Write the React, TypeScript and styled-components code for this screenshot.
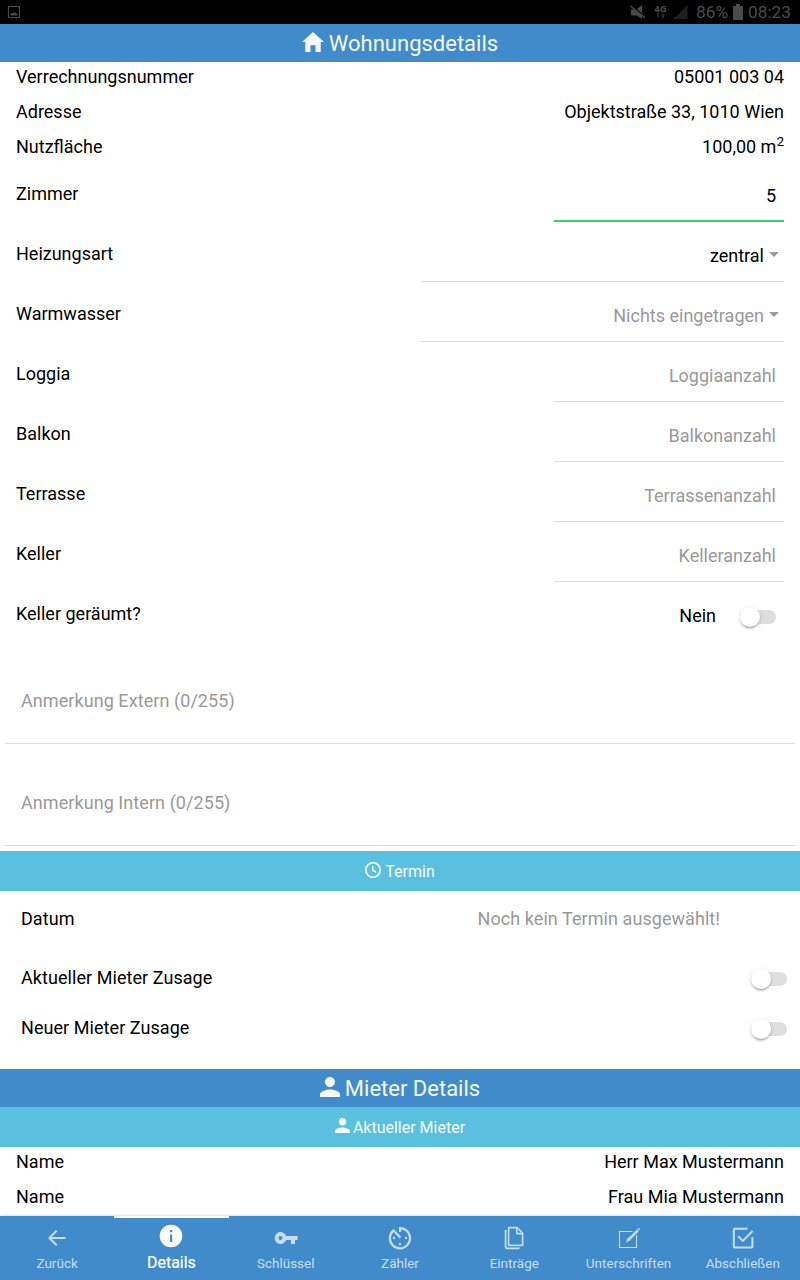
import React from "react";
import styled, { createGlobalStyle, css } from "styled-components";

const blue = "#428bca";
const cyan = "#5bc0de";

const GlobalStyle = createGlobalStyle`
  *, *::before, *::after { box-sizing: border-box; }
  body {
    margin: 0;
    background: #fff;
    color: #000;
    font: 18px/21px Roboto, sans-serif;
  }
  svg { display: block; flex: none; }
`;

const Screen = styled.div`
  display: flex;
  flex-direction: column;
  width: 800px;
  height: 1280px;
  overflow: hidden;
`;

const StatusBar = styled.div`
  flex: none;
  display: flex;
  align-items: center;
  height: 24px;
  padding: 0 8px 0 7px;
  background: #000;
  color: #4b4b4b;
  font-size: 17.3px;
`;

const StatusIcons = styled.div`
  display: flex;
  align-items: center;
  margin-left: auto;
`;

const StatusText = styled.span<{ $left: number; $width: number }>`
  margin-left: ${(p) => p.$left}px;
  width: ${(p) => p.$width}px;
  padding-top: 1px;
  white-space: nowrap;
`;

const NetworkBadge = styled.div`
  display: flex;
  flex-direction: column;
  align-items: center;
  width: 13px;
  margin: 0 6px 0 8px;
  padding-bottom: 2px;
  font: bold 9.5px/9px "Open Sans", sans-serif;
`;

const Main = styled.main`
  flex: 1;
  min-height: 0;
  overflow: hidden;
`;

const TitleBar = styled.header`
  display: flex;
  justify-content: center;
  align-items: center;
  gap: 5px;
  height: 38px;
  background: ${blue};
  color: #f4f8fc;
  font-size: 22px;
  line-height: 26px;
  svg { margin-top: -3px; }
  span { padding-top: 1px; }
`;

const SubtitleBar = styled.div`
  display: flex;
  justify-content: center;
  align-items: center;
  gap: 3px;
  height: 40px;
  background: ${cyan};
  color: #f4fbfd;
  font-size: 16px;
  svg { margin-top: -3px; }
  span { padding-top: 1px; }
`;

const InfoList = styled.div<{ $height: number }>`
  height: ${(p) => p.$height}px;
  padding: 4px 16px 0;
`;

const InfoRow = styled.div`
  display: flex;
  justify-content: space-between;
  height: 35px;
  sup {
    font-size: 13.5px;
    line-height: 0;
    vertical-align: 7px;
  }
`;

const FieldRow = styled.label`
  display: flex;
  justify-content: space-between;
  height: 60px;
  padding: 0 16px;
`;

const FieldLabel = styled.span`
  padding-top: 21px;
`;

const Control = styled.div<{ $wide?: boolean; $active?: boolean; $muted?: boolean }>`
  display: flex;
  justify-content: flex-end;
  width: ${(p) => (p.$wide ? 363 : 230)}px;
  padding: 23px ${(p) => (p.$wide ? 5 : 8)}px 0 0;
  border-bottom: ${(p) => (p.$active ? "2px solid #3fce6c" : "1px solid #dedede")};
  color: ${(p) => (p.$muted ? "#999" : "#000")};
`;

const Caret = styled.i`
  margin: 7px 0 0 5px;
  width: 10px;
  height: 5px;
  background: #999;
  clip-path: polygon(0 0, 100% 0, 50% 100%);
`;

const ToggleControl = styled.div`
  display: flex;
  gap: 24px;
  padding: 23px 8px 0 0;
`;

const Track = styled.span`
  position: relative;
  width: 36px;
  height: 14px;
  margin-top: 5px;
  border-radius: 7px;
  background: #dedede;
  &::after {
    content: "";
    position: absolute;
    left: 0;
    top: -3px;
    width: 20px;
    height: 20px;
    border-radius: 50%;
    background: #fff;
    box-shadow: 0 2px 2px rgba(0, 0, 0, 0.14), 0 3px 1px -2px rgba(0, 0, 0, 0.2),
      0 1px 5px rgba(0, 0, 0, 0.12);
  }
`;

const Note = styled.div`
  height: 102px;
  margin: 0 5px;
  padding: 48px 16px 0;
  border-bottom: 1px solid #dedede;
  color: #999;
  letter-spacing: 0.07px;
`;

const Notes = styled.section`
  padding-bottom: 5px;
`;

const Appointment = styled.section`
  height: 178px;
  padding: 17px 13px 0 21px;
  letter-spacing: 0.06px;
`;

const AppointmentRow = styled.div<{ $height: number }>`
  display: flex;
  justify-content: space-between;
  height: ${(p) => p.$height}px;
`;

const Placeholder = styled.span`
  margin-right: 67px;
  color: #999;
`;

const TabBar = styled.nav`
  flex: none;
  display: grid;
  grid-template-columns: repeat(7, 1fr);
  height: 64px;
  background: ${blue};
  box-shadow: 0 -1px 2px rgba(0, 0, 0, 0.12);
  z-index: 1;
`;

const Tab = styled.a<{ $active?: boolean }>`
  display: flex;
  flex-direction: column;
  align-items: center;
  padding-top: 10px;
  color: #c6def4;
  font-size: 13.5px;
  line-height: 16px;
  svg { margin-bottom: 5px; }
  ${(p) =>
    p.$active &&
    css`
      padding-top: 6px;
      border-top: 2px solid #fff;
      color: #fff;
      font-size: 15.9px;
      line-height: 19px;
      -webkit-text-stroke: 0.2px #fff;
      svg { margin-bottom: 5px; }
    `}
`;

const HomeIcon = () => (
  <svg width="22" height="20" viewBox="48 64 416 384" preserveAspectRatio="none" fill="currentColor">
    <path d="M208 448V320h96v128h97.6V256H464L256 64 48 256h62.4v192z" />
  </svg>
);

const PersonIcon = ({ size }: { size: number }) => (
  <svg width={size} height={size} viewBox="64 64 384 384" fill="currentColor">
    <path d="M256 256c52.805 0 96-43.201 96-96s-43.195-96-96-96-96 43.201-96 96 43.195 96 96 96zm0 48c-63.598 0-192 32.402-192 96v48h384v-48c0-63.598-128.402-96-192-96z" />
  </svg>
);

const ClockIcon = () => (
  <svg width="17" height="16" viewBox="0 0 17 16" fill="none" stroke="currentColor" strokeWidth="1.6">
    <circle cx="8" cy="8" r="7.2" />
    <path d="M7.8 4v4.4l3.4 2" strokeWidth="1.4" />
  </svg>
);

const tabIcons: Record<string, React.ReactNode> = {
  back: <path d="M20.5 11H6.8l5.6-5.6L11 4l-8 8 8 8 1.4-1.4L6.8 13h13.7z" />,
  info: <path fillRule="evenodd" d="M12 .7a11.3 11.3 0 1 0 0 22.6A11.3 11.3 0 0 0 12 .7zM11 6h2.2v2.2H11zm0 4.5h2.2V18H11z" />,
  key: (
    <path
      fillRule="evenodd"
      d="M12.2 10a6 6 0 1 0 0 4H17v4h4v-4h2.5v-4zM6.5 14a2 2 0 1 1 0-4 2 2 0 0 1 0 4z"
    />
  ),
  timer: (
    <>
      <path d="M11 1v5h2.2V3.4A8.9 8.9 0 1 1 5.6 6l6 6.4 1.6-1.6L5.5 3A11.2 11.2 0 1 0 12 1z" />
      <circle cx="12" cy="18" r="1.2" />
      <circle cx="18" cy="12" r="1.2" />
      <circle cx="6" cy="12" r="1.2" />
    </>
  ),
  copy: (
    <g fill="none" stroke="currentColor" strokeWidth="1.6" strokeLinejoin="round">
      <path d="M6.6 1.6h8.6L20.6 7v12.4h-14z" />
      <path d="M14.8 2v5.6h5.5" />
      <path d="M3.6 4v17q0 1.3 1.3 1.3h12.6" strokeWidth="1.8" />
    </g>
  ),
  sign: (
    <g fill="none" stroke="currentColor">
      <path d="M15.5 5.5H2.5v16h17V9" strokeWidth="1.1" />
      <path d="M12 13.3l8.8-9" strokeWidth="2.5" />
      <path d="M10.3 15l1-2.4 1.4 1.2zM21 4l1.6-1.6" strokeWidth="1.5" />
    </g>
  ),
  check: (
    <g fill="none" stroke="currentColor" strokeWidth="2">
      <path d="M16.5 2.8H3.8q-1 0-1 1v16.6q0 1 1 1h16.6q1 0 1-1V11.2" />
      <path d="M7.2 10.2l4.7 4.7L21.5 5" />
    </g>
  ),
};

const TabIcon = ({ name }: { name: string }) => (
  <svg width="24" height="24" viewBox="0 0 24 24" fill="currentColor">
    {tabIcons[name]}
  </svg>
);

const tabs = [
  ["back", "Zurück"],
  ["info", "Details"],
  ["key", "Schlüssel"],
  ["timer", "Zähler"],
  ["copy", "Einträge"],
  ["sign", "Unterschriften"],
  ["check", "Abschließen"],
];

const fields = [
  { label: "Zimmer", value: "5", active: true },
  { label: "Heizungsart", value: "zentral", select: true },
  { label: "Warmwasser", value: "Nichts eingetragen", select: true, muted: true },
  { label: "Loggia", value: "Loggiaanzahl", muted: true },
  { label: "Balkon", value: "Balkonanzahl", muted: true },
  { label: "Terrasse", value: "Terrassenanzahl", muted: true },
  { label: "Keller", value: "Kelleranzahl", muted: true },
];

export default function App() {
  return (
    <Screen>
      <GlobalStyle />
      <StatusBar>
        <svg width="14" height="14" viewBox="0 0 14 14">
          <rect x="1.5" y="1.5" width="11" height="11" rx=".5" fill="none" stroke="#4b4b4b" strokeWidth="1.2" />
          <path d="M3.5 10.5V9L5 7.5l1 1L7.5 7 9 8.2 10.5 9v1.5z" fill="#4b4b4b" />
        </svg>
        <StatusIcons>
          <svg width="16" height="16" viewBox="0 0 16 16" fill="#4b4b4b">
            <path d="M1 5.5h3l8 7V15l-5-3.5H1zM7 5l5-4v8.5z" />
            <path d="M.5 2l14.5 12" stroke="#4b4b4b" strokeWidth="1.5" />
          </svg>
          <NetworkBadge>
            4G
            <svg width="9" height="5" viewBox="0 0 9 5" fill="#292929">
              <path d="M1 0h2v2.5h1L2 5 0 2.5h1zM6 5h2V2.5h1L7 0 5 2.5h1z" />
            </svg>
          </NetworkBadge>
          <svg width="15" height="16" viewBox="0 0 15 16">
            <path d="M14.5 1v14H1z" fill="#202020" />
            <path d="M2.5 13.3V15H1z" fill="#4b4b4b" />
          </svg>
          <StatusText $left={8} $width={37}>86%</StatusText>
          <svg width="10" height="16" viewBox="0 0 10 16" fill="#4b4b4b">
            <path d="M0 2h3V0h4v2h3v14H0z" />
          </svg>
          <StatusText $left={5} $width={44}>08:23</StatusText>
        </StatusIcons>
      </StatusBar>

      <Main>
        <TitleBar>
          <HomeIcon />
          <span>Wohnungsdetails</span>
        </TitleBar>
        <InfoList $height={100}>
          <InfoRow><span>Verrechnungsnummer</span><span>05001 003 04</span></InfoRow>
          <InfoRow><span>Adresse</span><span>Objektstraße 33, 1010 Wien</span></InfoRow>
          <InfoRow><span>Nutzfläche</span><span>100,00 m<sup>2</sup></span></InfoRow>
        </InfoList>

        {fields.map((f) => (
          <FieldRow key={f.label}>
            <FieldLabel>{f.label}</FieldLabel>
            <Control $wide={f.select} $active={f.active} $muted={f.muted}>
              {f.value}
              {f.select && <Caret />}
            </Control>
          </FieldRow>
        ))}
        <FieldRow>
          <FieldLabel>Keller geräumt?</FieldLabel>
          <ToggleControl>
            Nein
            <Track />
          </ToggleControl>
        </FieldRow>

        <Notes>
          <Note>Anmerkung Extern (0/255)</Note>
          <Note>Anmerkung Intern (0/255)</Note>
        </Notes>

        <SubtitleBar>
          <ClockIcon />
          <span>Termin</span>
        </SubtitleBar>
        <Appointment>
          <AppointmentRow $height={59}>
            <span>Datum</span>
            <Placeholder>Noch kein Termin ausgewählt!</Placeholder>
          </AppointmentRow>
          <AppointmentRow $height={50}>
            <span>Aktueller Mieter Zusage</span>
            <Track />
          </AppointmentRow>
          <AppointmentRow $height={50}>
            <span>Neuer Mieter Zusage</span>
            <Track />
          </AppointmentRow>
        </Appointment>

        <TitleBar>
          <PersonIcon size={20} />
          <span>Mieter Details</span>
        </TitleBar>
        <SubtitleBar>
          <PersonIcon size={15} />
          <span>Aktueller Mieter</span>
        </SubtitleBar>
        <InfoList $height={75}>
          <InfoRow><span>Name</span><span>Herr Max Mustermann</span></InfoRow>
          <InfoRow><span>Name</span><span>Frau Mia Mustermann</span></InfoRow>
        </InfoList>
      </Main>

      <TabBar>
        {tabs.map(([icon, label]) => (
          <Tab key={icon} $active={icon === "info"}>
            <TabIcon name={icon} />
            {label}
          </Tab>
        ))}
      </TabBar>
    </Screen>
  );
}
